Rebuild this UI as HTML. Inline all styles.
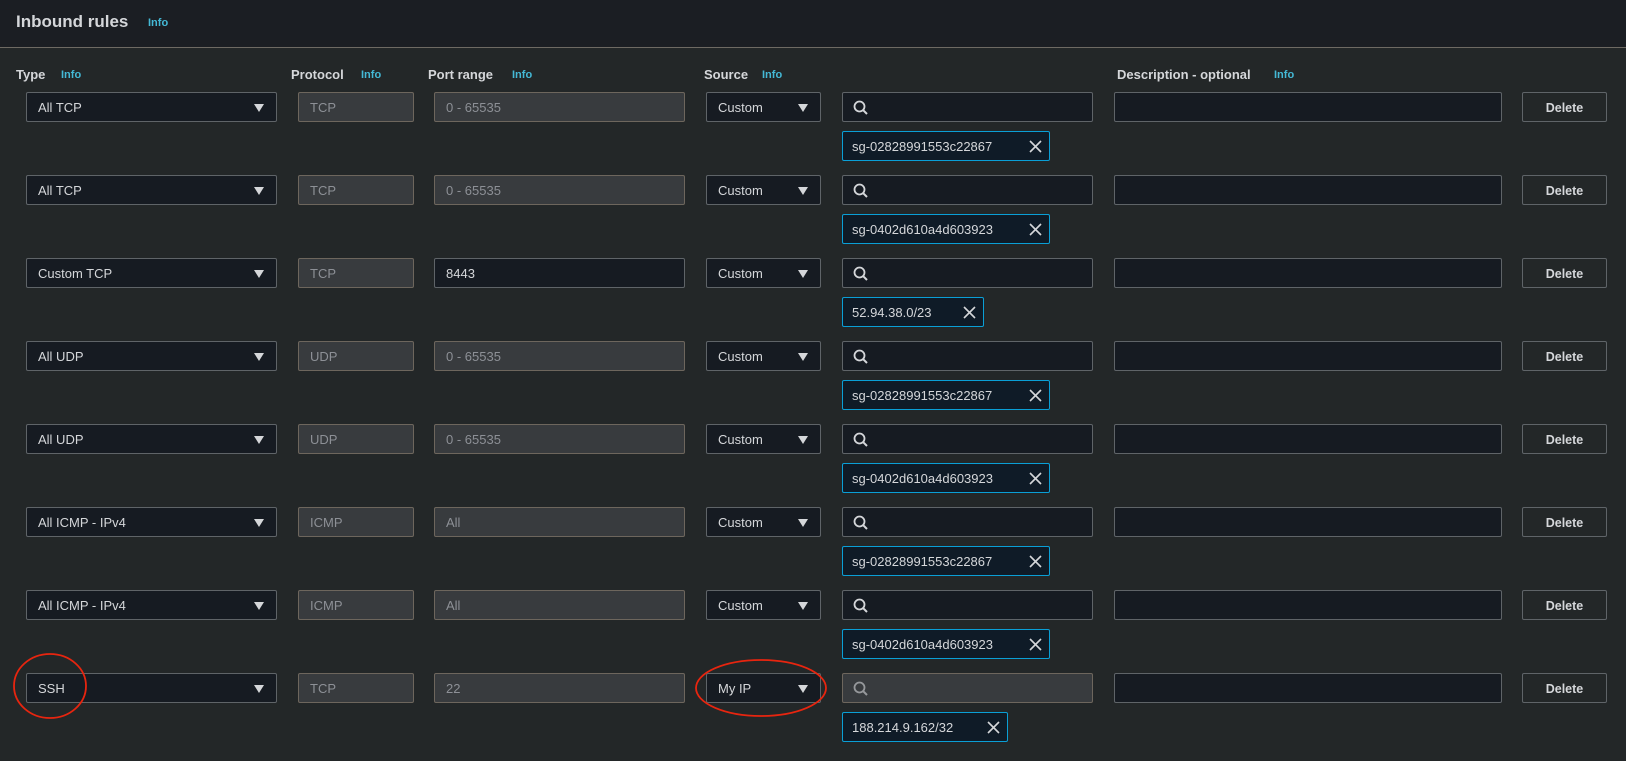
<!DOCTYPE html>
<html><head><meta charset="utf-8"><style>
*{box-sizing:border-box;margin:0;padding:0}
body{width:1626px;height:761px;background:#232728;font-family:"Liberation Sans",sans-serif;color:#d5d7da;position:relative;overflow:hidden}
.hdr{position:absolute;left:0;top:0;width:1626px;height:48px;background:#1b1e23;border-bottom:1px solid #6e6a63}
.t{position:absolute;left:16px;top:12px;font-size:17px;font-weight:bold;color:#d5d7da}
.info{color:#44b9d6;font-size:11px;font-weight:bold;position:absolute}
.lbl{position:absolute;top:67px;font-size:13px;font-weight:bold;color:#d5d7da}
.row{position:absolute;left:0;width:1626px;height:80px}
.b{position:absolute;top:0;height:30px;font-size:13px;line-height:30px;padding-left:11px;border:1px solid #5f6468;background:#161b22;border-radius:2px}
.dis{background:#383b3e;border-color:#6d665d;color:#8d9096}
.sel{left:26px;width:251px}
.pr{left:298px;width:116px}
.po{left:434px;width:251px}
.src{left:706px;width:115px}
.se{left:842px;width:251px}
.de{left:1114px;width:388px}
.del{left:1522px;width:85px;background:transparent;font-weight:bold;text-align:center;padding:0;font-size:12.5px}
.arr{position:absolute;right:12px;top:11px;width:0;height:0;border-left:5px solid transparent;border-right:5px solid transparent;border-top:8px solid #d5d7da}
.tag{position:absolute;left:842px;top:39px;height:30px;background:#0f1b27;border:1px solid #0a9fd6;font-size:13px;line-height:29px;padding-left:9px;border-radius:2px}
.x{position:absolute;right:7px;top:8px}
.mag{position:absolute;left:10px;top:7px}
</style></head><body>
<div class="hdr"><div class="t">Inbound rules</div><span class="info" style="left:148px;top:17px">Info</span></div>
<div class="lbl" style="left:16px">Type</div><span class="info" style="left:61px;top:69px">Info</span>
<div class="lbl" style="left:291px">Protocol</div><span class="info" style="left:361px;top:69px">Info</span>
<div class="lbl" style="left:428px">Port range</div><span class="info" style="left:512px;top:69px">Info</span>
<div class="lbl" style="left:704px">Source</div><span class="info" style="left:762px;top:69px">Info</span>
<div class="lbl" style="left:1117px">Description - optional</div><span class="info" style="left:1274px;top:69px">Info</span>

<svg width="0" height="0" style="position:absolute"><defs>
<g id="m"><circle cx="6.5" cy="6.5" r="5" fill="none" stroke="#d5d7da" stroke-width="1.8"/><line x1="10.2" y1="10.2" x2="14" y2="14" stroke="#d5d7da" stroke-width="2"/></g>
<g id="xx"><path d="M1 1L12 12M12 1L1 12" stroke="#d5d7da" stroke-width="1.6"/></g></defs></svg>

<div class="row" style="top:92px"><div class="b sel">All TCP<i class="arr"></i></div><div class="b pr dis">TCP</div><div class="b po dis">0 - 65535</div><div class="b src">Custom<i class="arr"></i></div><div class="b se"><svg class="mag" width="15" height="15"><use href="#m"/></svg></div><div class="b de"></div><div class="b del">Delete</div><div class="tag" style="width:208px">sg-02828991553c22867<svg class="x" width="13" height="13"><use href="#xx"/></svg></div></div>
<div class="row" style="top:175px"><div class="b sel">All TCP<i class="arr"></i></div><div class="b pr dis">TCP</div><div class="b po dis">0 - 65535</div><div class="b src">Custom<i class="arr"></i></div><div class="b se"><svg class="mag" width="15" height="15"><use href="#m"/></svg></div><div class="b de"></div><div class="b del">Delete</div><div class="tag" style="width:208px">sg-0402d610a4d603923<svg class="x" width="13" height="13"><use href="#xx"/></svg></div></div>
<div class="row" style="top:258px"><div class="b sel">Custom TCP<i class="arr"></i></div><div class="b pr dis">TCP</div><div class="b po">8443</div><div class="b src">Custom<i class="arr"></i></div><div class="b se"><svg class="mag" width="15" height="15"><use href="#m"/></svg></div><div class="b de"></div><div class="b del">Delete</div><div class="tag" style="width:142px">52.94.38.0/23<svg class="x" width="13" height="13"><use href="#xx"/></svg></div></div>
<div class="row" style="top:341px"><div class="b sel">All UDP<i class="arr"></i></div><div class="b pr dis">UDP</div><div class="b po dis">0 - 65535</div><div class="b src">Custom<i class="arr"></i></div><div class="b se"><svg class="mag" width="15" height="15"><use href="#m"/></svg></div><div class="b de"></div><div class="b del">Delete</div><div class="tag" style="width:208px">sg-02828991553c22867<svg class="x" width="13" height="13"><use href="#xx"/></svg></div></div>
<div class="row" style="top:424px"><div class="b sel">All UDP<i class="arr"></i></div><div class="b pr dis">UDP</div><div class="b po dis">0 - 65535</div><div class="b src">Custom<i class="arr"></i></div><div class="b se"><svg class="mag" width="15" height="15"><use href="#m"/></svg></div><div class="b de"></div><div class="b del">Delete</div><div class="tag" style="width:208px">sg-0402d610a4d603923<svg class="x" width="13" height="13"><use href="#xx"/></svg></div></div>
<div class="row" style="top:507px"><div class="b sel">All ICMP - IPv4<i class="arr"></i></div><div class="b pr dis">ICMP</div><div class="b po dis">All</div><div class="b src">Custom<i class="arr"></i></div><div class="b se"><svg class="mag" width="15" height="15"><use href="#m"/></svg></div><div class="b de"></div><div class="b del">Delete</div><div class="tag" style="width:208px">sg-02828991553c22867<svg class="x" width="13" height="13"><use href="#xx"/></svg></div></div>
<div class="row" style="top:590px"><div class="b sel">All ICMP - IPv4<i class="arr"></i></div><div class="b pr dis">ICMP</div><div class="b po dis">All</div><div class="b src">Custom<i class="arr"></i></div><div class="b se"><svg class="mag" width="15" height="15"><use href="#m"/></svg></div><div class="b de"></div><div class="b del">Delete</div><div class="tag" style="width:208px">sg-0402d610a4d603923<svg class="x" width="13" height="13"><use href="#xx"/></svg></div></div>
<div class="row" style="top:673px"><div class="b sel">SSH<i class="arr"></i></div><div class="b pr dis">TCP</div><div class="b po dis">22</div><div class="b src">My IP<i class="arr"></i></div><div class="b se dis"><svg class="mag" width="15" height="15"><use href="#m" opacity="0.6"/></svg></div><div class="b de"></div><div class="b del">Delete</div><div class="tag" style="width:166px">188.214.9.162/32<svg class="x" width="13" height="13"><use href="#xx"/></svg></div></div>

<svg width="1626" height="761" style="position:absolute;left:0;top:0;pointer-events:none">
<ellipse cx="50" cy="686" rx="36" ry="32" fill="none" stroke="#e8250f" stroke-width="1.8"/>
<ellipse cx="761" cy="688" rx="65" ry="28" fill="none" stroke="#e8250f" stroke-width="1.8"/>
</svg>
</body></html>
